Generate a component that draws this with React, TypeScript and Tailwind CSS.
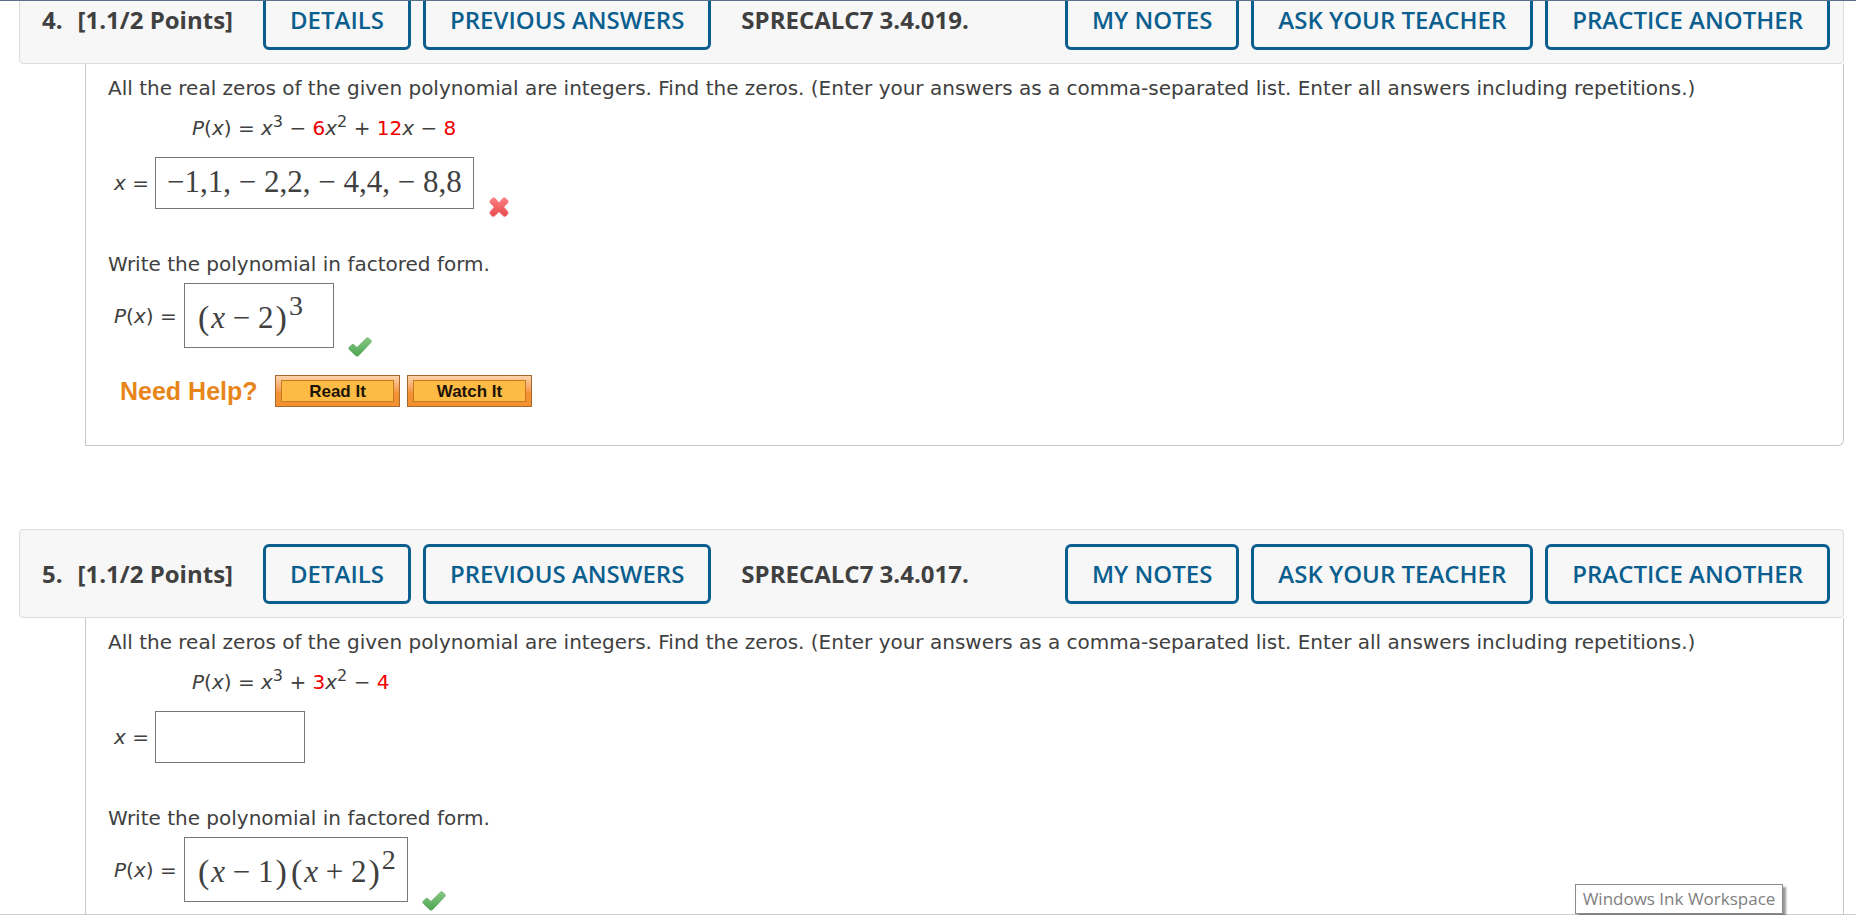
import type { ReactNode } from "react";

function ActionButton({ children }: { children: ReactNode }) {
  return (
    <button
      type="button"
      className="h-[60px] whitespace-nowrap rounded-md border-3 border-[#0b5f8f] px-6 text-2xl font-semibold text-[#0b5f8f]"
    >
      {children}
    </button>
  );
}

function QuestionHeader({ number, code }: { number: string; code: string }) {
  return (
    <header className="flex h-[89px] items-center rounded-sm border border-[#dcdcdc] bg-[#f7f7f7] pr-[13px] pl-[22px] font-['Open_Sans','Noto_Sans',sans-serif]">
      <h2 className="flex w-[221px] gap-[15px] whitespace-nowrap text-2xl font-bold">
        <span>{number}.</span>
        <span>[1.1/2 Points]</span>
      </h2>
      <div className="flex gap-3">
        <ActionButton>DETAILS</ActionButton>
        <ActionButton>PREVIOUS ANSWERS</ActionButton>
      </div>
      <strong className="ml-[30px] whitespace-nowrap text-2xl">SPRECALC7 {code}.</strong>
      <div className="ml-auto flex gap-3">
        <ActionButton>MY NOTES</ActionButton>
        <ActionButton>ASK YOUR TEACHER</ActionButton>
        <ActionButton>PRACTICE ANOTHER</ActionButton>
      </div>
    </header>
  );
}

function Power({ exponent }: { exponent: string }) {
  return (
    <>
      <i>x</i>
      <sup className="text-base">{exponent}</sup>
    </>
  );
}

function Num({ children }: { children: ReactNode }) {
  return <span className="text-[#f00000]">{children}</span>;
}

function Cross() {
  return (
    <svg viewBox="0 0 22 22" className="size-[22px]" role="img" aria-label="Incorrect">
      <defs>
        <linearGradient id="cross" x1="0" y1="0" x2="0" y2="1">
          <stop offset="0" stopColor="#fa8080" />
          <stop offset="1" stopColor="#e84a4e" />
        </linearGradient>
      </defs>
      <path
        d="M2 4.5 4.5 2Q6 1 7.500 2.500L11 6.500 14.500 2.500Q16 1 17.500 2L20 4.500Q21 6 19.500 7.500L16 11 19.500 15Q21 16.500 20 18L18 20.300Q16.500 21.300 15 19.800L11 16 7 19.800Q5.500 21.300 4 20.300L2 18Q1 16.500 2.500 15L6 11 2.500 7.500Q1 6 2 4.500Z"
        fill="url(#cross)"
        stroke="#f7a3a3"
        strokeWidth="0.6"
      />
    </svg>
  );
}

function Check() {
  return (
    <svg viewBox="0 0 24 20" className="h-5 w-6" role="img" aria-label="Correct">
      <defs>
        <linearGradient id="check" x1="0" y1="0" x2="0" y2="1">
          <stop offset="0" stopColor="#84c884" />
          <stop offset="1" stopColor="#4fa552" />
        </linearGradient>
      </defs>
      <path
        d="M1 10.500 4 7.500Q5 7 6 8L9 10.500 18.500 1.200Q19.500 .4 20.500 1.200L23 3.500Q23.600 4.500 22.800 5.500L10.500 18.700Q9 19.800 7.500 18.500L1.300 12.500Q.4 11.500 1 10.500Z"
        fill="url(#check)"
        stroke="#5fa861"
        strokeWidth="0.8"
      />
    </svg>
  );
}

function Paren({ children }: { children: ReactNode }) {
  return <span className="mx-[2px] text-[34px] leading-none">{children}</span>;
}

function HelpButton({ children }: { children: ReactNode }) {
  return (
    <button
      type="button"
      className="h-8 w-[125px] border border-[#a8672c] bg-linear-to-b from-[#fbd3ac] to-[#f39030] to-60% p-1 px-[5px]"
    >
      <span className="flex h-full items-center justify-center border border-[#c47a20] bg-[#fdba45] pt-[2px] text-[17px] font-bold text-[#1c1405]">
        {children}
      </span>
    </button>
  );
}

interface QuestionProps {
  number: string;
  code: string;
  formula: ReactNode;
  zeros: string;
  zerosWidth: string;
  zerosMark?: ReactNode;
  factored: ReactNode;
  factoredWidth: string;
  help?: ReactNode;
}

function Question(props: QuestionProps) {
  const { number, code, formula, zeros, zerosWidth, zerosMark, factored, factoredWidth, help } =
    props;
  return (
    <section>
      <QuestionHeader number={number} code={code} />
      <div className="ml-[66px] h-[382px] rounded-br-md border border-t-0 border-[#c8c8c8] pl-[22px] text-xl leading-6">
        <p className="pt-3">
          All the real zeros of the given polynomial are integers. Find the zeros. (Enter your
          answers as a comma-separated list. Enter all answers including repetitions.)
        </p>
        <p className="mt-4 h-6 pl-[84px]">{formula}</p>
        <div className="mt-[17px] flex h-[52px] items-center pl-[6px]">
          <label htmlFor={"zeros-" + number} className="w-[41px] whitespace-nowrap">
            <i>x</i> =
          </label>
          <input
            id={"zeros-" + number}
            defaultValue={zeros}
            className={
              "h-[52px] border border-[#777] px-[11px] pb-[2px] font-['Liberation_Serif',serif] text-[31px] " +
              zerosWidth
            }
          />
          <span className="mt-12 ml-[14px]">{zerosMark}</span>
        </div>
        <p className="mt-[43px]">Write the polynomial in factored form.</p>
        <div className="mt-[7px] flex h-[65px] items-center pl-[6px]">
          <span id={"factored-" + number} className="w-[70px] whitespace-nowrap">
            <i>P</i>(<i>x</i>) =
          </span>
          <div
            role="textbox"
            contentEditable
            suppressContentEditableWarning
            aria-labelledby={"factored-" + number}
            className={
              "flex h-[65px] items-center whitespace-pre border border-[#777] px-[11px] pt-1 font-['Liberation_Serif',serif] text-[31px] " +
              factoredWidth
            }
          >
            {factored}
          </div>
          <span className="mt-[62px] ml-[14px]">
            <Check />
          </span>
        </div>
        {help}
      </div>
    </section>
  );
}

function NeedHelp() {
  return (
    <div className="mt-[27px] flex h-8 items-center gap-[7px] pl-3 font-['Liberation_Sans',sans-serif]">
      <span className="w-[148px] text-[25px] font-bold text-[#e8851a]">Need Help?</span>
      <HelpButton>Read It</HelpButton>
      <HelpButton>Watch It</HelpButton>
    </div>
  );
}

export default function App() {
  return (
    <main className="relative h-screen overflow-hidden bg-white font-['DejaVu_Sans',sans-serif] text-[#404040]">
      <div className="-mt-[25px] flex flex-col gap-[83px] pr-3 pl-[19px]">
        <Question
          number="4"
          code="3.4.019"
          formula={
            <>
              <i>P</i>(<i>x</i>) = <Power exponent="3" /> − <Num>6</Num>
              <Power exponent="2" /> + <Num>12</Num>
              <i>x</i> − <Num>8</Num>
            </>
          }
          zeros="−1,1, − 2,2, − 4,4, − 8,8"
          zerosWidth="w-[319px]"
          zerosMark={<Cross />}
          factored={
            <>
              <Paren>(</Paren>
              <i>x</i> − 2<Paren>)</Paren>
              <span className="-mt-6 text-[28px]">3</span>
            </>
          }
          factoredWidth="w-[150px]"
          help={<NeedHelp />}
        />
        <Question
          number="5"
          code="3.4.017"
          formula={
            <>
              <i>P</i>(<i>x</i>) = <Power exponent="3" /> + <Num>3</Num>
              <Power exponent="2" /> − <Num>4</Num>
            </>
          }
          zeros=""
          zerosWidth="w-[150px]"
          factored={
            <>
              <Paren>(</Paren>
              <i>x</i> − 1<Paren>)</Paren>
              <Paren>(</Paren>
              <i>x</i> + 2<Paren>)</Paren>
              <span className="-mt-6 text-[28px]">2</span>
            </>
          }
          factoredWidth="w-[224px]"
        />
      </div>
      <div className="absolute inset-x-0 top-0 h-px bg-[#5a7088]" />
      <div className="absolute inset-x-0 bottom-0 h-px bg-[#c9d0d0]" />
      <div
        role="tooltip"
        className="absolute right-[73px] bottom-px flex h-[30px] w-[208px] items-center justify-center whitespace-nowrap border border-[#8a8a8a] bg-white font-['Open_Sans',sans-serif] text-[17px] text-[#808080] shadow-[3px_3px_2px_#00000066]"
      >
        Windows Ink Workspace
      </div>
    </main>
  );
}
